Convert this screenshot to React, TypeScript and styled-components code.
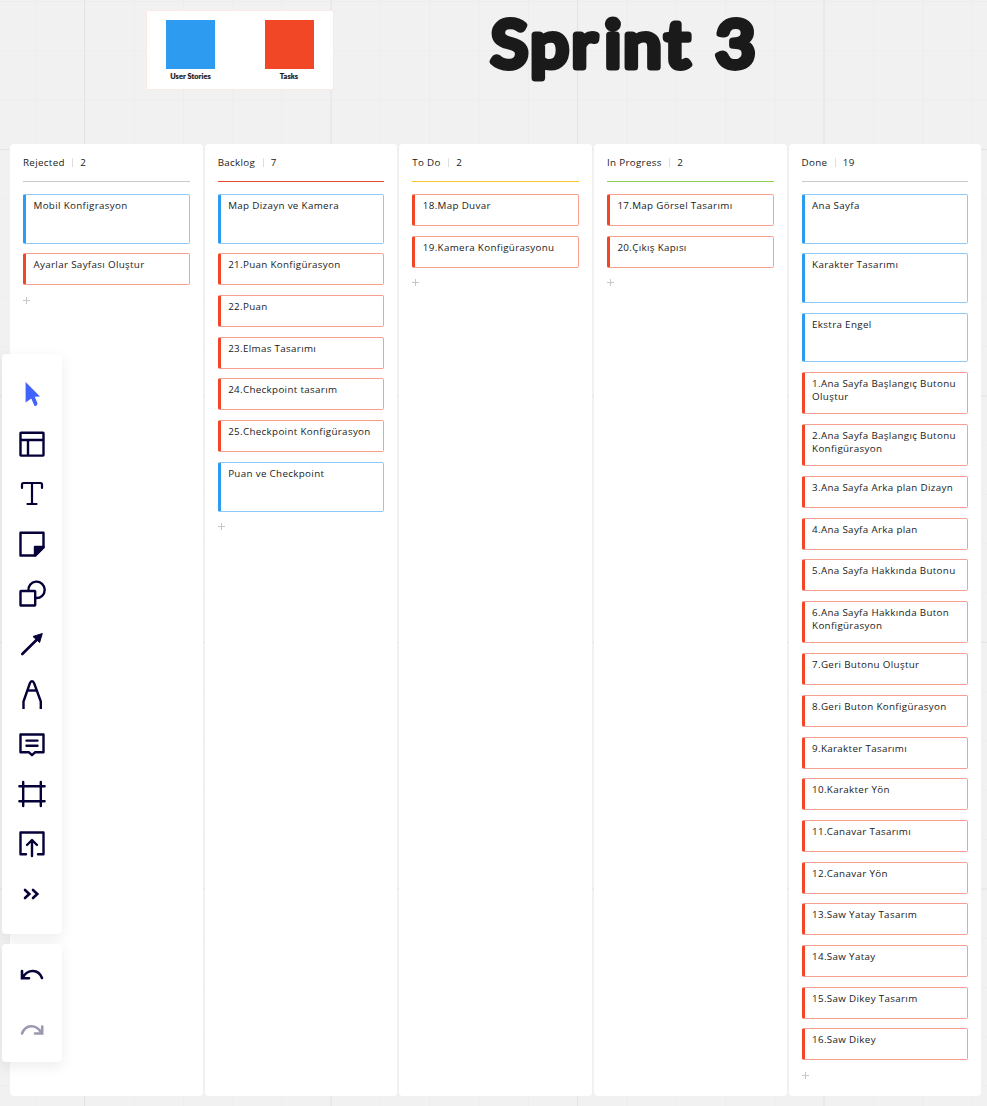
import React from 'react';
import styled, { createGlobalStyle } from 'styled-components';

const GlobalStyle = createGlobalStyle`
  * { box-sizing: border-box; }
  html, body { margin: 0; padding: 0; }
  body {
    overflow: hidden;
    font-family: 'Open Sans', 'Noto Sans', sans-serif;
    color: #1a1a1a;
  }
`;

const Canvas = styled.div`
  position: relative;
  width: 987px;
  height: 1106px;
  overflow: hidden;
  background-color: #f1f1f1;
  background-image:
    linear-gradient(to right, #e4e4e4 1px, transparent 1px),
    linear-gradient(to bottom, #e4e4e4 1px, transparent 1px),
    linear-gradient(to right, #ededed 1px, transparent 1px),
    linear-gradient(to bottom, #ededed 1px, transparent 1px);
  background-size: 246.5px 246.5px, 246.5px 246.5px, 49.3px 49.3px, 49.3px 49.3px;
  background-position: 84px 0, 0 149px, 35px 0, 0 1px;
`;

const TopBar = styled.header`
  display: flex;
  align-items: flex-start;
  height: 143.5px;
  padding: 10px 0 0 146px;
`;

const Legend = styled.div`
  display: flex;
  justify-content: space-between;
  width: 188px;
  height: 80px;
  padding: 9px 11px 0 10.5px;
  background: #fff;
  border: 1px solid #fbe9e7;
`;

const LegendItem = styled.div`
  display: flex;
  flex-direction: column;
  align-items: center;
  width: 66px;
`;

const Swatch = styled.div<{ $color: string }>`
  width: 49px;
  height: 49px;
  background: ${(p) => p.$color};
`;

const LegendLabel = styled.span`
  margin-top: 3px;
  font: 900 7.3px/9px Lato, sans-serif;
  letter-spacing: 0.1px;
  -webkit-text-stroke: 0.2px #1a1a1a;
  white-space: nowrap;
`;

const Title = styled.h1`
  margin: 0 0 0 146px;
  line-height: 0;
`;

const TitleArt = styled.svg`
  display: block;
  overflow: visible;
  font-family: Lato, sans-serif;
  font-size: 63.5px;
  font-weight: 400;
  fill: #1a1a1a;
  stroke: #1a1a1a;
  stroke-width: 7px;
  stroke-linejoin: round;
`;

const Board = styled.main`
  display: flex;
  gap: 2px;
  height: 952px;
  padding-left: 10px;
`;

const Column = styled.section`
  flex: none;
  width: 192.65px;
  padding: 0 13px;
  background: #fff;
  border-radius: 4px;
`;

const ColumnHeader = styled.div<{ $line: string }>`
  display: flex;
  align-items: center;
  height: 38px;
  padding-top: 1px;
  border-bottom: 1px solid ${(p) => p.$line};
  font-size: 9.8px;
  letter-spacing: 0.32px;
`;

const Divider = styled.span`
  width: 1px;
  height: 9px;
  margin: 0 7px 0 7.5px;
  background: #dedede;
`;

const CardList = styled.div`
  display: flex;
  flex-direction: column;
  gap: 9.7px;
  padding-top: 12.5px;
`;

type Kind = 'story' | 'task';

const Card = styled.div<{ $kind: Kind; $lines: number }>`
  height: ${(p) => (p.$kind === 'story' ? 49.7 : p.$lines > 1 ? 42.3 : 32)}px;
  padding: 4px 5px 0 7.5px;
  background: #fff;
  border: 1px solid ${(p) => (p.$kind === 'story' ? '#8dc8f8' : '#f7a08f')};
  border-left: 3px solid ${(p) => (p.$kind === 'story' ? '#2d9bf0' : '#f24726')};
  border-radius: 2px;
  font-size: 9.8px;
  line-height: 13px;
  letter-spacing: 0.33px;
  white-space: pre-line;
`;

const AddButton = styled.button`
  display: flex;
  width: 7px;
  height: 7px;
  margin-top: 1.8px;
  padding: 0;
  border: 0;
  background: none;
`;

const Dock = styled.aside`
  position: absolute;
  left: 2px;
  top: 354px;
  display: flex;
  flex-direction: column;
  gap: 10px;
`;

const ToolPanel = styled.div<{ $height: number; $step: number; $top: number }>`
  display: flex;
  flex-direction: column;
  align-items: center;
  width: 60px;
  height: ${(p) => p.$height}px;
  padding-top: ${(p) => p.$top}px;
  gap: ${(p) => p.$step - 32}px;
  background: #fff;
  border-radius: 4px;
  box-shadow: 0 4px 14px rgba(5, 0, 56, 0.08);
`;

const ToolIcon = styled.svg<{ $color?: string }>`
  flex: none;
  display: block;
  width: 32px;
  height: 32px;
  color: ${(p) => p.$color ?? '#050038'};
  fill: none;
  stroke: currentColor;
  stroke-width: 2.4;
`;

interface Item { text: string; kind?: Kind }
interface ColumnData { name: string; line: string; count: number; items: Item[] }

const story = (text: string): Item => ({ text, kind: 'story' });
const task = (text: string): Item => ({ text, kind: 'task' });

const columns: ColumnData[] = [
  { name: 'Rejected', line: '#c9c9c9', count: 2, items: [story('Mobil Konfigrasyon'), task('Ayarlar Sayfası Oluştur')] },
  {
    name: 'Backlog', line: '#ea4a2e', count: 7, items: [
      story('Map Dizayn ve Kamera'), task('21.Puan Konfigürasyon'), task('22.Puan'), task('23.Elmas Tasarımı'),
      task('24.Checkpoint tasarım'), task('25.Checkpoint Konfigürasyon'), story('Puan ve Checkpoint'),
    ],
  },
  { name: 'To Do', line: '#f8c630', count: 2, items: [task('18.Map Duvar'), task('19.Kamera Konfigürasyonu')] },
  { name: 'In Progress', line: '#8fd14f', count: 2, items: [task('17.Map Görsel Tasarımı'), task('20.Çıkış Kapısı')] },
  {
    name: 'Done', line: '#c9c9c9', count: 19, items: [
      story('Ana Sayfa'), story('Karakter Tasarımı'), story('Ekstra Engel'),
      task('1.Ana Sayfa Başlangıç Butonu\nOluştur'), task('2.Ana Sayfa Başlangıç Butonu\nKonfigürasyon'),
      task('3.Ana Sayfa Arka plan Dizayn'), task('4.Ana Sayfa Arka plan'), task('5.Ana Sayfa Hakkında Butonu'),
      task('6.Ana Sayfa Hakkında Buton\nKonfigürasyon'), task('7.Geri Butonu Oluştur'), task('8.Geri Buton Konfigürasyon'),
      task('9.Karakter Tasarımı'), task('10.Karakter Yön'), task('11.Canavar Tasarımı'), task('12.Canavar Yön'),
      task('13.Saw Yatay Tasarım'), task('14.Saw Yatay'), task('15.Saw Dikey Tasarım'), task('16.Saw Dikey'),
    ],
  },
];

const tools: React.ReactNode[] = [
  <g key="template"><rect x="4.5" y="4.8" width="23" height="22.8" rx="0.5" /><path d="M4.5 12H27.5M12 12V27.5" /></g>,
  <path key="text" d="M6 10V6.5Q6 5 7.5 5H24.5Q26 5 26 6.5V10M16 5V26M11.5 26H20.5" strokeLinecap="round" strokeWidth="2.2" />,
  <g key="sticky"><path d="M4.5 4.8H27.5V19.5L19.5 27.5H4.5Z" strokeLinejoin="round" /><path d="M27.5 19L19 27.5V19Z" fill="currentColor" strokeLinejoin="round" /></g>,
  <g key="shapes"><path d="M12.4 13A8.2 8.2 0 1 1 20 20" /><rect x="4.5" y="13" width="14.7" height="14.5" rx="0.5" /></g>,
  <g key="arrow"><path d="M6.3 26L22 10.5" strokeLinecap="round" strokeWidth="2.6" /><path d="M26.3 5.5L23.6 14.5L17 8.5Z" fill="currentColor" strokeWidth="1" strokeLinejoin="round" /></g>,
  <g key="pen"><path d="M7.5 31V23.5L14 4.8Q16 1.8 18 4.8L24.8 23.5V31" strokeLinejoin="round" /><path d="M12 12.5H20.5" /></g>,
  <g key="comment"><path d="M4.5 6.5H27.5V24.2H19.2L16 27.2L12.8 24.2H4.5Z" strokeLinejoin="round" /><path d="M10.5 12.6H21.5M10.5 17.8H21.5" strokeLinecap="round" /></g>,
  <path key="frame" d="M7.2 4V28M24.8 4V28M3.4 8.2H28.6M3.4 23.2H28.6" strokeLinecap="round" />,
  <path key="upload" d="M10 26.2H4.5V4.5H27.5V26.2H22M16 28V12.5M11 17L16 12L21 17" strokeLinejoin="round" strokeLinecap="round" />,
  <path key="more" d="M9 12L13.3 16L9 20M17 12L21.3 16L17 20" strokeLinecap="round" strokeWidth="2.6" />,
];

export default function App() {
  return (
    <>
      <GlobalStyle />
      <Canvas>
        <TopBar>
          <Legend>
            <LegendItem><Swatch $color="#2d9bf0" /><LegendLabel>User Stories</LegendLabel></LegendItem>
            <LegendItem><Swatch $color="#f24726" /><LegendLabel>Tasks</LegendLabel></LegendItem>
          </Legend>
          <Title>
            <TitleArt width="290" height="90">
              <text transform="scale(1.07 1)" x="10.3 47.2 85.8 116.5 134 173 220.3" y="57">Sprint3</text>
            </TitleArt>
          </Title>
        </TopBar>
        <Board>
          {columns.map((c) => (
            <Column key={c.name}>
              <ColumnHeader $line={c.line}>{c.name}<Divider />{c.count}</ColumnHeader>
              <CardList>
                {c.items.map((i) => (
                  <Card key={i.text} $kind={i.kind ?? 'task'} $lines={i.text.split('\n').length}>{i.text}</Card>
                ))}
                <AddButton aria-label="Add card">
                  <svg width="7" height="7" viewBox="0 0 7 7" stroke="#c8c8c8"><path d="M3.5 0V7M0 3.5H7" /></svg>
                </AddButton>
              </CardList>
            </Column>
          ))}
        </Board>
        <Dock>
          <ToolPanel $height={580} $step={50} $top={24}>
            <ToolIcon viewBox="0 0 32 32" $color="#4262ff">
              <path d="M9.6 4L24 18.5L18.8 18.8L21.5 25.5Q21 28.5 18.5 28L15.3 20.5L9.6 24.5Z" fill="currentColor" stroke="none" />
            </ToolIcon>
            {tools.map((t, n) => <ToolIcon key={n} viewBox="0 0 32 32">{t}</ToolIcon>)}
          </ToolPanel>
          <ToolPanel $height={118} $step={55} $top={15}>
            <ToolIcon viewBox="0 0 32 32"><path d="M26 19C22.5 9.8 12 9.8 7 18M6 12V19.2H13" strokeLinecap="round" strokeWidth="2.6" /></ToolIcon>
            <ToolIcon viewBox="0 0 32 32" $color="#9b99af"><path d="M6 19.5C9.5 10 20 10 25 18.3M26.2 12.5V19.5H19" strokeLinecap="round" strokeWidth="2.6" /></ToolIcon>
          </ToolPanel>
        </Dock>
      </Canvas>
    </>
  );
}
